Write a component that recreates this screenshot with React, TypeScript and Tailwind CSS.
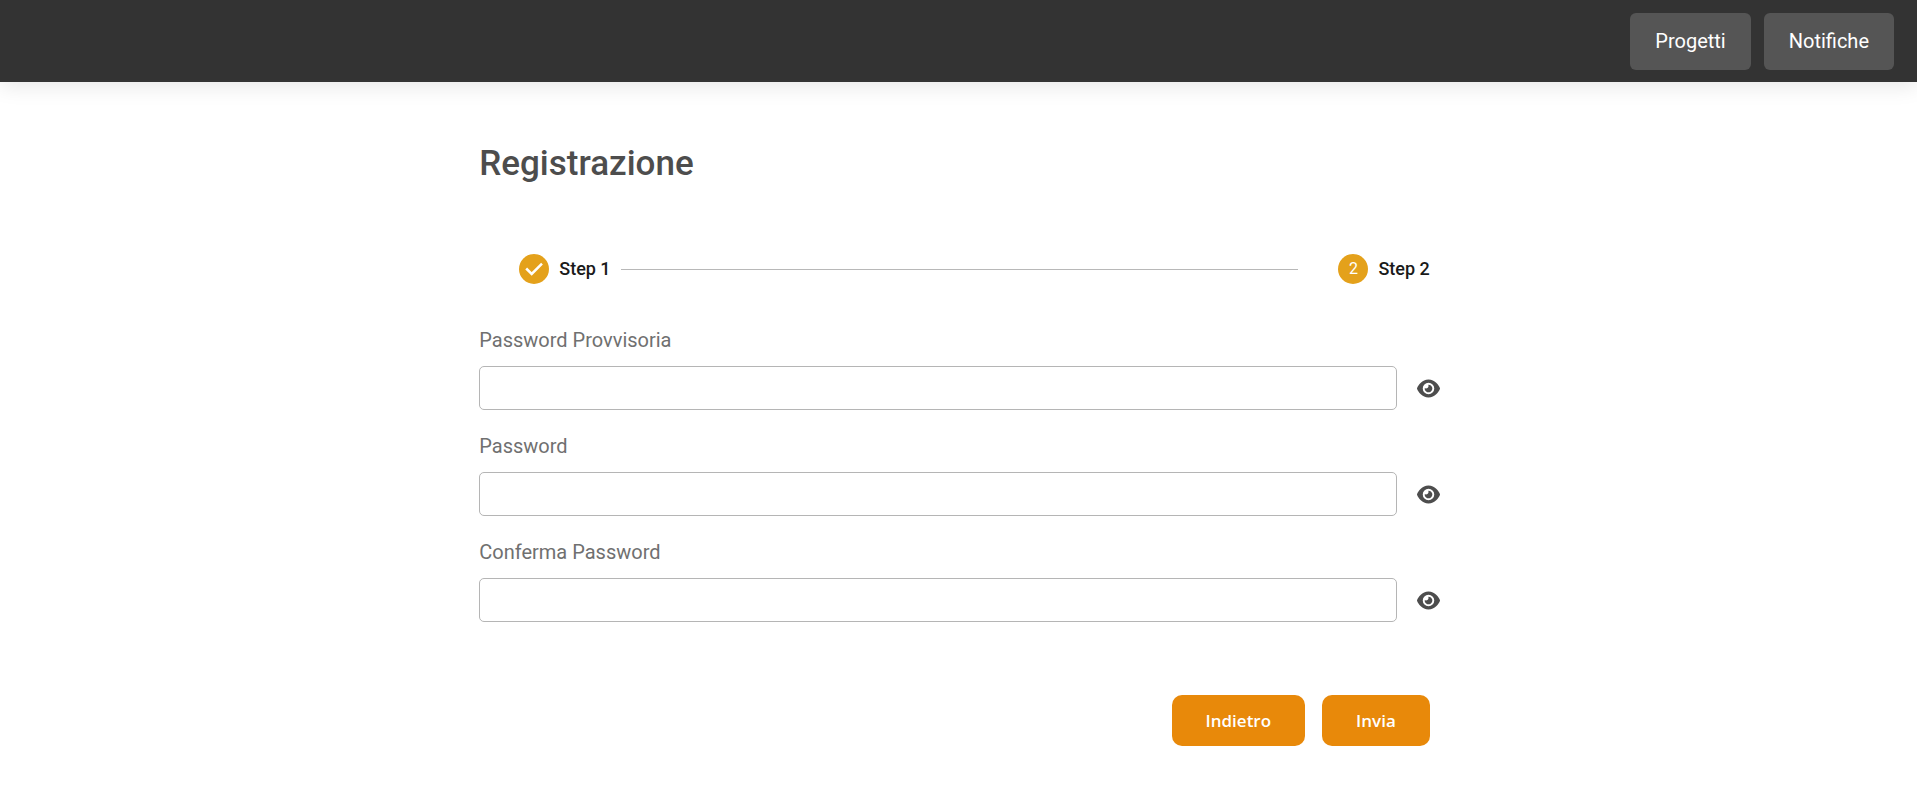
import { useState } from "react";
import { FaEye } from "react-icons/fa6";

const navItems = ["Progetti", "Notifiche"];

const fields = [
  { id: "temporary-password", label: "Password Provvisoria" },
  { id: "password", label: "Password" },
  { id: "confirm-password", label: "Conferma Password" },
];

function Header() {
  return (
    <header className="bg-[#333] shadow-[0_4px_20px_rgba(0,0,0,0.1)]">
      <nav className="flex justify-end gap-[13px] pt-[13px] pr-[23px] pb-3">
        {navItems.map((item) => (
          <a
            key={item}
            href="#"
            className="rounded-md bg-[#555] px-[25px] py-[14px] text-xl leading-[29px] text-white"
          >
            {item}
          </a>
        ))}
      </nav>
    </header>
  );
}

function Stepper() {
  return (
    <ol className="flex items-center pr-2 pl-10 text-lg leading-[30px] font-medium text-[#1a1a1a]">
      <li className="flex items-center gap-[10px]">
        <span className="flex size-[30px] items-center justify-center rounded-full bg-[#e4a11b]">
          <svg viewBox="0 0 30 30" className="size-[30px]" fill="none" stroke="white" strokeWidth="2.5" aria-hidden="true">
            <path d="M7.2 14.5 L12.7 20 L23 9.6" />
          </svg>
        </span>
        <span>Step 1</span>
      </li>
      <li aria-hidden="true" className="mr-10 ml-[10px] h-px flex-1 bg-[#b8b8b8]" />
      <li className="flex items-center gap-[10px]">
        <span className="flex size-[30px] items-center justify-center rounded-full bg-[#e4a11b] text-base font-normal text-white">
          2
        </span>
        <span>Step 2</span>
      </li>
    </ol>
  );
}

function PasswordField({ id, label }: { id: string; label: string }) {
  const [visible, setVisible] = useState(false);
  return (
    <div>
      <label htmlFor={id} className="block text-xl leading-7 text-[#707070]">
        {label}
      </label>
      <div className="-mr-[9px] mt-3 flex items-center gap-5">
        <input
          id={id}
          type={visible ? "text" : "password"}
          className="h-11 min-w-0 flex-1 rounded-[5px] border border-[#b5b5b5] bg-white px-3 text-base text-[#4d4d4d]"
        />
        <button
          type="button"
          aria-label={`Mostra ${label}`}
          onClick={() => setVisible(!visible)}
          className="flex w-[30px] items-center text-[#4d4d4d]"
        >
          <FaEye size={23} />
        </button>
      </div>
    </div>
  );
}

export default function App() {
  return (
    <div className="min-h-screen bg-white font-['Roboto',sans-serif]">
      <Header />
      <main className="mx-auto w-1/2 pt-14">
        <h1 className="text-[35px] leading-[52px] font-medium text-[#4d4d4d]">Registrazione</h1>
        <form onSubmit={(event) => event.preventDefault()} className="pt-16">
          <Stepper />
          <div className="flex flex-col gap-[22px] pt-[42px]">
            {fields.map((field) => (
              <PasswordField key={field.id} id={field.id} label={field.label} />
            ))}
          </div>
          <div className="flex justify-end gap-[17px] pt-[73px] pr-2 font-['Open_Sans',sans-serif] text-[17px] leading-[27px] font-semibold text-white">
            <button type="button" className="rounded-[10px] bg-[#e8890a] px-[34px] py-3">
              Indietro
            </button>
            <button type="submit" className="rounded-[10px] bg-[#e8890a] px-[34px] py-3">
              Invia
            </button>
          </div>
        </form>
      </main>
    </div>
  );
}
